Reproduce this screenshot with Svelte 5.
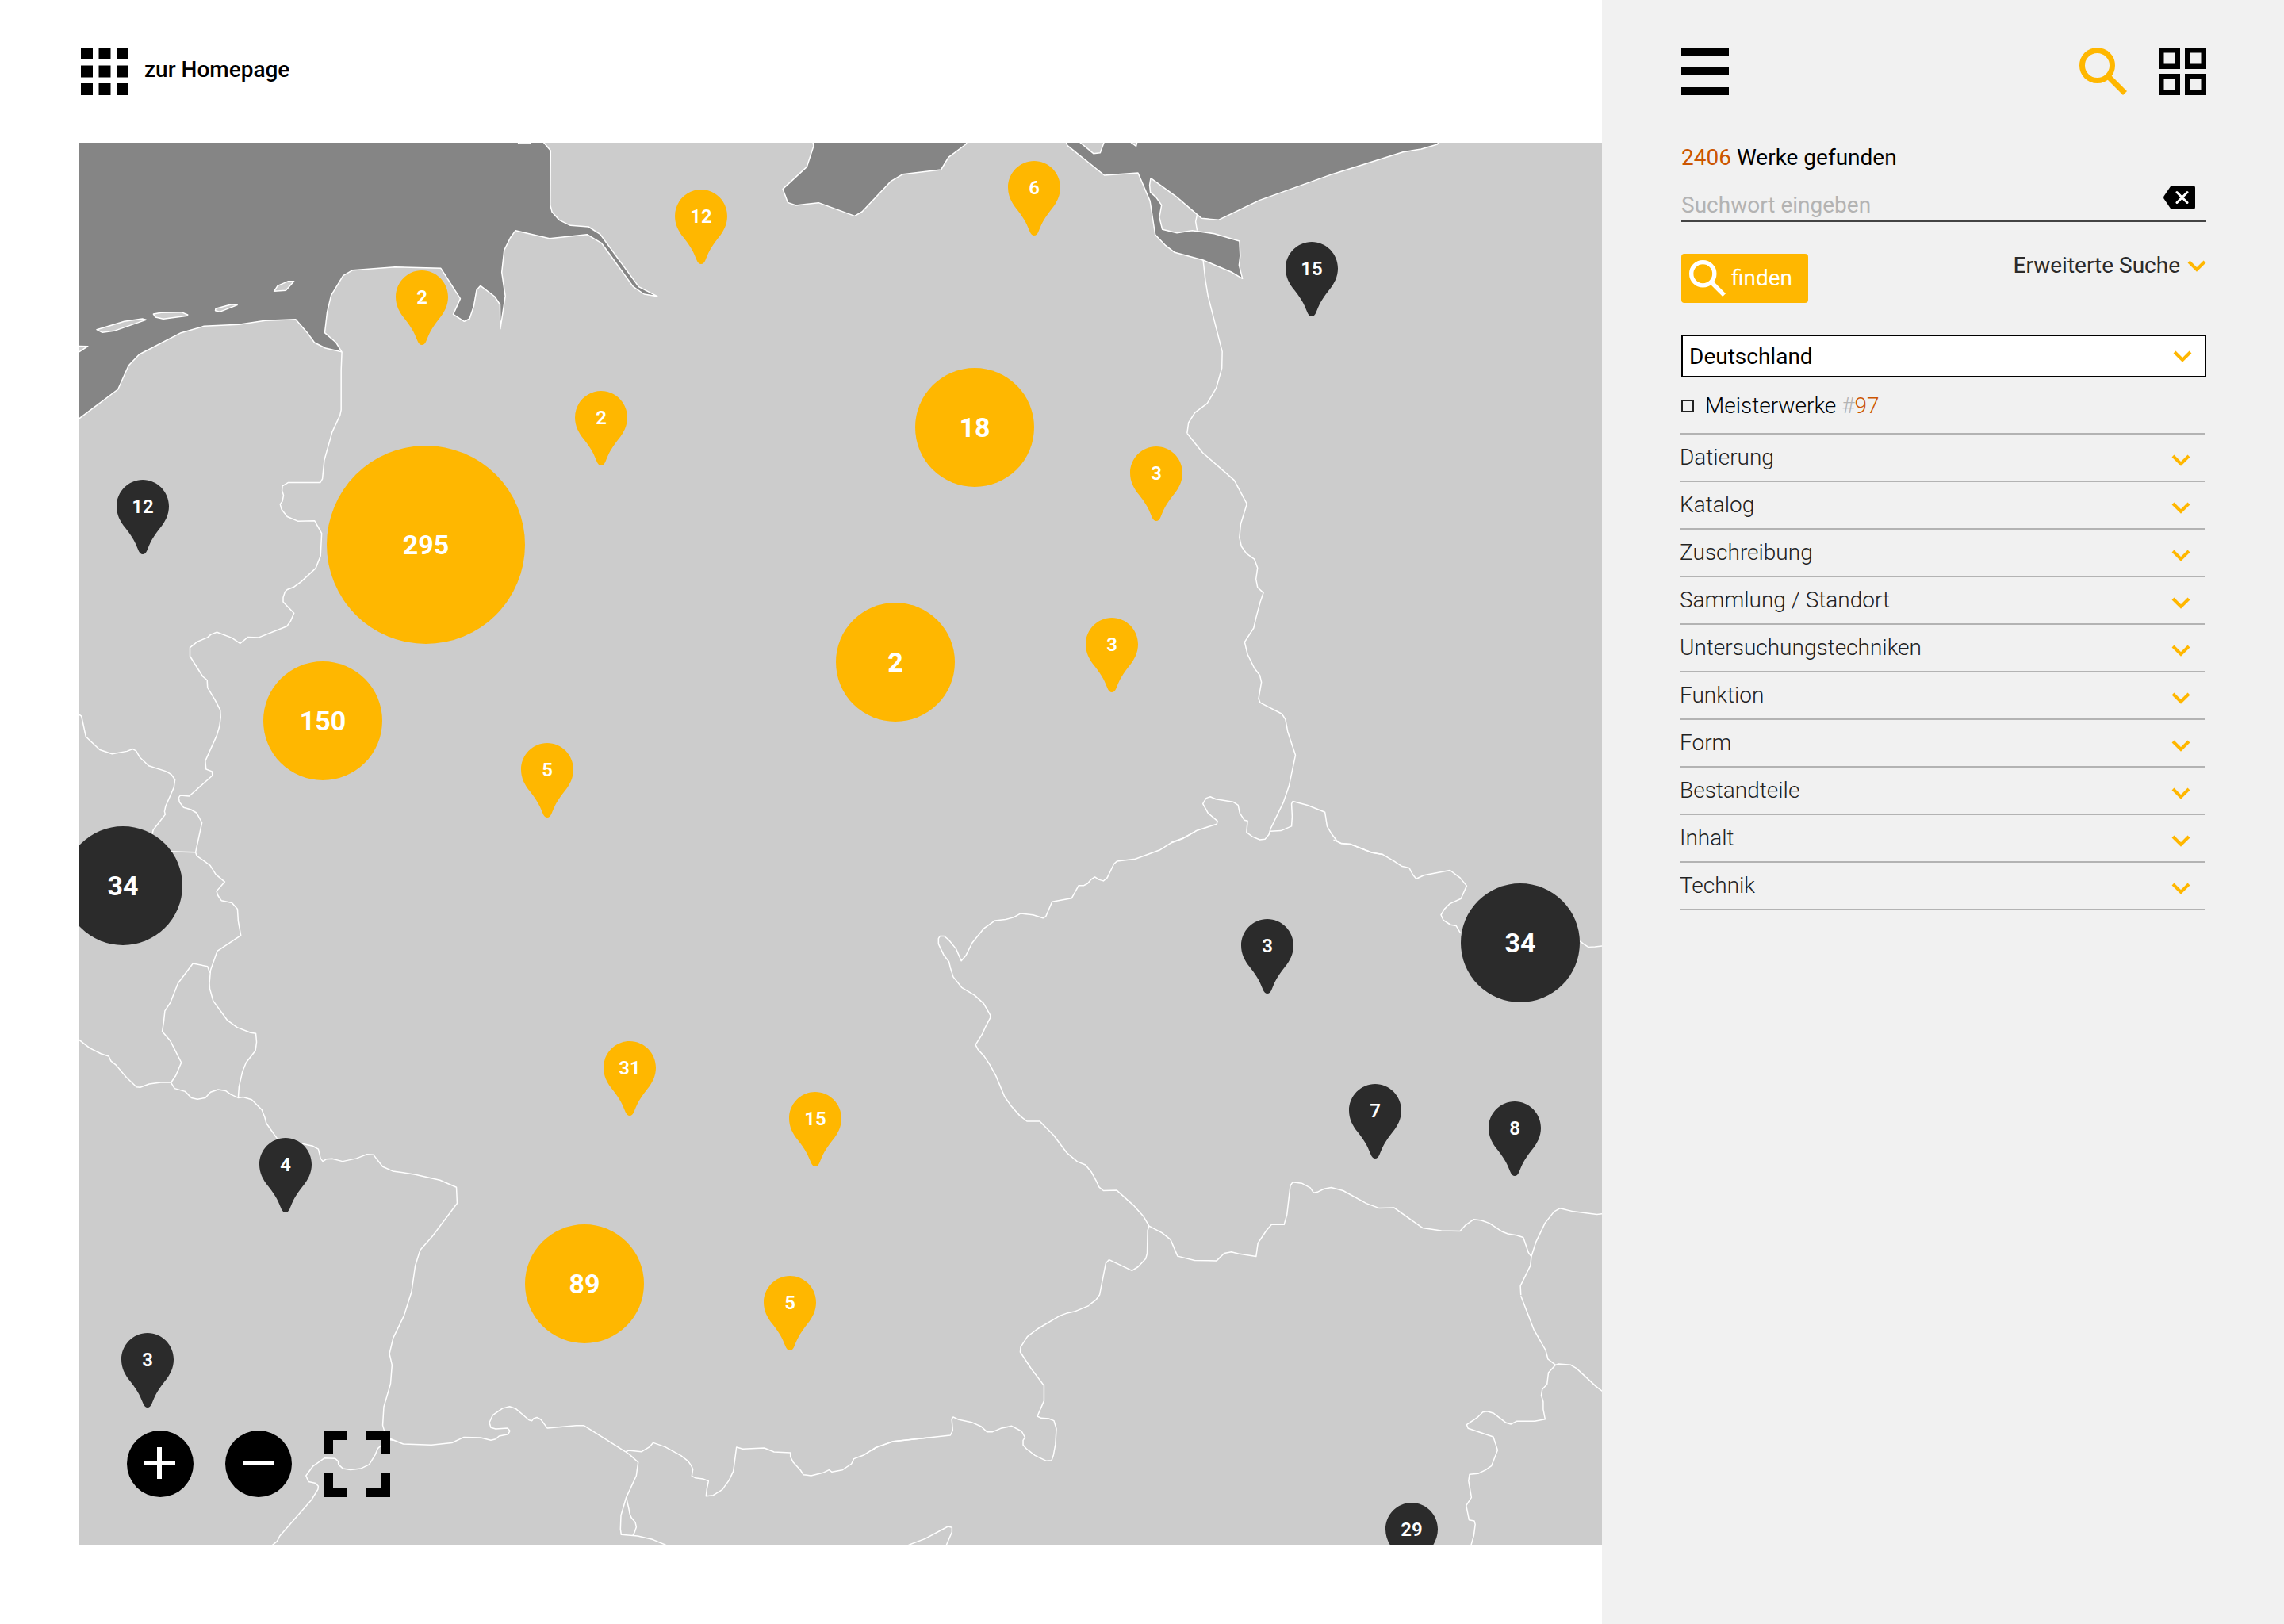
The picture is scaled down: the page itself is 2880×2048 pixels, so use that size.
<script lang="ts">
  const filters = [
    'Datierung', 'Katalog', 'Zuschreibung', 'Sammlung / Standort', 'Untersuchungstechniken',
    'Funktion', 'Form', 'Bestandteile', 'Inhalt', 'Technik',
  ];

  // Extent of the map drawing, in map units
  const W = 1920;
  const H = 1768;

  // Outlines are quantised per sector: each has an origin and a number of steps per map unit
  const sectors = [
    {
      x: -20, y: -140, kx: 2.24, ky: 3,
      sea: [
        'M20 380L1340 380L1357 420L1376 450L1375 656L1380 682L1400 712L1432 733L1483 738L1516 766L1625 965L1677 1001L1640 993L1609 964L1520 800L1479 767L1373 782L1277 752L1262 780L1245 826L1238 910L1248 1000L1234 1124L1233 1032L1218 1002L1178 961L1167 977L1159 1038L1147 1086L1132 1096L1101 1069L1121 1010L1066 895L936 890L817 902L790 923L756 998L745 1060L738 1139L770 1176L786 1211L740 1197L709 1176L689 1139L656 1088L570 1093L495 1108L397 1114L332 1139L214 1221L184 1263L154 1353L45 1463L20 1490Z',
      ],
      land: [
        'M94 1127L172 1096L223 1086L233 1090L143 1132L110 1138Z',
        'M254 1068L276 1063L333 1061L351 1071L350 1075L282 1087L260 1080Z',
        'M430 1048L475 1031L491 1034L441 1060L429 1055Z',
        'M605 961L635 944L651 944L628 979L595 982Z',
        'M20 1189L69 1190L45 1211L20 1230Z',
        'M1285 400L1285 423L1319 423L1319 400Z',
      ],
      lines: [],
    },
    {
      x: 600, y: -20, kx: 2.24, ky: 3,
      sea: [
        'M726 40L730 73L711 151L643 235L657 286L680 297L744 287L846 337L867 321L949 205L982 179L1090 162L1111 115L1160 66L1170 40Z',
      ],
      land: [], lines: [],
    },
    {
      x: 1200, y: -20, kx: 2.119, ky: 3,
      sea: [
        'M90 40L97 70L196 183L286 174L318 280L332 408L360 449L384 475L460 504L535 549L565 574L556 523L559 488L557 432L490 404L431 392L390 401L351 388L343 342L349 296L334 266L319 247L317 220L320 194L390 266L456 346L501 352L610 278L805 179L994 95L1043 84L1086 66L1095 40Z',
      ],
      land: ['M115 40L132 60L167 101L185 98L200 40Z', 'M262 40L268 60L281 73L286 40Z'],
      lines: [
        'M444 332L440 358L444 392',
        'M460 504L466 580L473 640L511 850L510 913L495 988L471 1046L438 1081L421 1119L417 1160',
      ],
    },
    {
      x: -20, y: 320, kx: 2.119, ky: 2.119,
      sea: [], land: [],
      lines: [
        'M744 -119L742 -70L742 36L739 50L718 95L697 170L692 220L686 230L600 230L585 239L584 251L588 264L585 280L579 288L583 302L598 321L626 333L671 332L690 366L687 426L674 459L635 495L616 509L598 516L592 522L587 537L587 549L616 579L607 600L597 614L522 644L493 643L472 660L450 645L410 630L394 636L385 644L358 655L338 671L338 694L372 748L384 758L385 778L404 809L419 838L420 857L417 881L410 905L379 974L381 996L397 1002L398 1013L336 1068L312 1066L308 1072L310 1084L321 1098L341 1104L356 1113L370 1139L353 1218L356 1227L392 1253L407 1277L431 1297L409 1322L413 1334L422 1347L450 1353L465 1370L467 1402L474 1440L411 1482L393 1533L390 1568L391 1583L400 1615L438 1667L464 1686L500 1700L514 1702L516 1725L513 1748L488 1780L478 1805L469 1845L467 1875',
        'M30 842L48 854L60 909L97 944L130 955L170 948L185 942L194 947L204 964L228 987L275 1002L288 1010L298 1024L295 1045L273 1095L270 1109L272 1117L240 1158L237 1170',
        'M280 1216L353 1218',
        'M391 1540L385 1523L346 1515L306 1568L286 1619L271 1642L268 1670L264 1697L285 1721L315 1780L300 1815L287 1834',
      ],
    },
    {
      x: -20, y: 1060, kx: 2.119, ky: 2.119,
      sea: [], land: [],
      lines: [
        'M30 142L70 173L100 188L121 195L127 208L140 218L168 251L195 277L205 278L229 269L260 265L287 265L297 281L325 289L342 306L358 310L379 306L393 291L413 284L433 287L447 297L467 306L480 304L503 311L530 338L538 358L542 374L571 415L600 425L640 429L666 435L681 443L687 468L693 476L702 470L718 469L746 476L783 468L811 457L828 458L853 490L880 502L940 511L1006 526L1050 545L1052 588L985 677L953 713L940 755L930 825L910 888L881 948L871 990L878 1020L874 1070L856 1132L853 1181L860 1205L875 1218L908 1231L983 1234L1038 1228L1070 1213L1115 1214L1142 1221L1155 1218L1164 1210L1188 1205L1193 1196L1187 1189L1155 1191L1142 1187L1138 1174L1147 1154L1173 1136L1192 1131L1209 1137L1244 1167L1252 1169L1256 1163L1265 1160L1276 1166L1293 1189L1370 1182L1391 1182L1502 1252',
        'M880 1221L867 1219L840 1243L833 1260L817 1286L794 1297L767 1300L747 1297L735 1286L734 1277L726 1270L697 1269L667 1290L648 1316L655 1332L674 1336L681 1344L680 1352L663 1380L578 1477L571 1491L550 1508',
      ],
    },
    {
      x: 670, y: 1600, kx: 3, ky: 3,
      sea: [], land: [],
      lines: [
        'M57 153L67 147L117 152L147 134L161 118L206 134L266 167L293 188L305 205L311 219L307 244L320 251L349 255L370 263L364 293L361 320L388 317L422 296L448 260L464 226L476 135L500 142L581 138L618 153L680 156L680 171L690 191L718 222L729 239L758 243L803 232L826 221L837 229L877 221L911 198L920 179L957 165L1003 136L1068 113L1203 99',
        'M57 153L72 163L104 192L97 243L59 325L39 393L37 445L40 466L102 471L158 484L204 503L230 515',
        'M59 325L69 369L72 387L79 403L93 419L97 437L90 458L84 469',
        'M1110 514L1132 503L1190 481L1276 435L1291 439L1291 456L1268 510',
      ],
    },
    {
      x: 1300, y: 320, kx: 2.45, ky: 2.6133,
      sea: [], land: [],
      lines: [
        'M238 122L285 185L383 276L422 354L403 420L399 465L405 494L421 518L445 536L455 565L450 602L455 629L473 647L463 678L450 730L443 763L415 809L424 850L445 895L462 919L467 942L458 996L463 1009L530 1046L541 1064L548 1104L572 1182L552 1284L535 1337L495 1425L490 1444L478 1459L462 1461L438 1450L421 1436L424 1399L414 1396L400 1373L395 1347L379 1336L326 1327L309 1319L296 1324L286 1342L302 1373L331 1399L329 1409L266 1431L228 1454L188 1470',
        'M495 1433L527 1431L560 1416L562 1385L560 1342L564 1334L610 1347L663 1370L670 1417L684 1442L699 1463L713 1473L741 1475L808 1503L842 1509',
      ],
    },
    {
      x: 1000, y: 780, kx: 1.668, ky: 2.24,
      sea: [], land: [],
      lines: [
        'M681 197L652 219L629 230L604 251L553 276L515 282L508 290L494 329L486 338L476 334L468 327L460 334L453 345L445 351L434 351L419 387L378 397L365 438L359 443L338 434L312 430L297 441L280 447L258 450L234 473L210 513L197 548L187 564L176 530L161 505L151 494L142 494L139 501L139 516L150 547L161 566L164 583L170 609L188 639L215 661L234 684L248 717L248 725L238 750L231 771L217 801L222 814L235 833L247 857L260 889L278 947L292 974L310 1001L325 1017L352 1017L381 1056L409 1106L431 1131L448 1140L460 1159L471 1186L477 1203L486 1213L514 1212L549 1254L571 1287L582 1313L609 1332L627 1351L642 1398L678 1410L724 1411L740 1390L755 1386L770 1391L807 1399L811 1361L829 1325L840 1308L866 1309L872 1280L879 1199L884 1189L903 1192L921 1205L928 1219L936 1217L950 1208L965 1204L990 1213L1039 1249L1065 1262L1097 1261L1157 1318L1197 1326L1236 1327L1248 1310L1265 1294L1281 1297L1298 1305L1325 1329L1337 1335L1355 1339L1369 1345L1380 1388L1386 1399L1384 1425L1363 1482L1364 1508',
        'M970 222L986 232L1005 234L1051 258L1073 263L1097 282L1114 297L1129 301L1137 321L1144 332L1160 322L1215 308L1236 329L1250 352L1238 388L1214 403L1203 418L1196 434L1201 449L1216 462L1228 465L1237 486',
        'M1488 508L1497 517L1506 525L1520 524L1550 520',
        'M1386 1399L1396 1357L1415 1304L1434 1272L1446 1263L1475 1272L1524 1280L1550 1276',
        'M582 1313L579 1325L578 1390L575 1405L559 1428L546 1439L498 1408L491 1418L478 1507L470 1522L456 1536',
      ],
    },
    {
      x: 1000, y: 1320, kx: 1.668, ky: 3,
      sea: [], land: [],
      lines: [
        'M456 439L427 461L411 467L394 478L347 528L326 557L312 596L311 615L333 675L361 742L361 800L347 858L355 865L371 867L382 875L387 905L385 965L381 1004L377 1025L366 1027L342 1006L324 981L317 967L317 949L321 938L314 915L293 895L270 904L253 917L241 917L229 897L209 881L182 871L170 861L167 868L169 912L164 930L45 953L7 977L-1 988',
        'M1364 403L1391 529L1416 608L1421 642L1437 664L1443 660L1469 664L1481 677L1522 745L1550 784',
        'M1437 664L1422 693L1419 737L1409 756L1407 779L1411 803L1411 832L1415 869L1393 877L1355 877L1343 888L1333 883L1307 847L1293 839L1284 842L1273 862L1250 890L1253 904L1306 936L1315 986L1302 1046L1290 1061L1274 1075L1256 1078L1254 1102L1260 1165L1249 1196L1255 1250L1266 1254L1268 1267L1265 1309L1257 1360',
      ],
    },
  ];

  const pins = [
    { n: 2, x: 432, y: 161 }, { n: 12, x: 784, y: 59 }, { n: 6, x: 1204, y: 23 },
    { n: 2, x: 658, y: 313 }, { n: 3, x: 1358, y: 383 }, { n: 3, x: 1302, y: 599 },
    { n: 5, x: 590, y: 757 }, { n: 31, x: 694, y: 1133 }, { n: 15, x: 928, y: 1197 },
    { n: 5, x: 896, y: 1429 },
    { n: 15, x: 1554, y: 125, dark: true }, { n: 12, x: 80, y: 425, dark: true },
    { n: 3, x: 1498, y: 979, dark: true }, { n: 7, x: 1634, y: 1187, dark: true },
    { n: 8, x: 1810, y: 1209, dark: true }, { n: 4, x: 260, y: 1255, dark: true },
    { n: 3, x: 86, y: 1501, dark: true }, { n: 29, x: 1680, y: 1715, dark: true },
  ];

  const clusters = [
    { n: 295, x: 437, y: 507, big: true }, { n: 150, x: 307, y: 729 }, { n: 18, x: 1129, y: 359 },
    { n: 2, x: 1029, y: 655 }, { n: 89, x: 637, y: 1439 },
    { n: 34, x: 55, y: 937, dark: true }, { n: 34, x: 1817, y: 1009, dark: true },
  ];

  const place = (x: number, y: number) => `left:${(x / W) * 100}%;top:${(y / H) * 100}%`;
</script>

{#snippet chevron()}
  <svg class="chevron" viewBox="0 0 24 15" aria-hidden="true"><path d="M2 2L12 12L22 2" /></svg>
{/snippet}

{#snippet lens()}
  <svg class="lens" viewBox="0 0 60 60" aria-hidden="true">
    <circle cx="22.500" cy="22.500" r="19" />
    <path d="M37.500 37.500L57.500 57.500" />
  </svg>
{/snippet}

<div class="app">
  <main>
    <header class="top">
      <a class="home" href="#home">
        <svg viewBox="0 0 60 60" aria-hidden="true">
          {#each [0, 22.5, 45] as y}
            {#each [0, 22.5, 45] as x}
              <rect {x} {y} width="15" height="15" />
            {/each}
          {/each}
        </svg>
        <span>zur Homepage</span>
      </a>
    </header>

    <section class="map" aria-label="Karte">
      <svg class="base" viewBox="0 0 {W} {H}" preserveAspectRatio="none" aria-hidden="true">
        {#each sectors as s}
          <g transform="translate({s.x} {s.y}) scale({1 / s.kx} {1 / s.ky})">
            {#each s.sea as d}<path class="sea" {d} />{/each}
            {#each s.land as d}<path class="land" {d} />{/each}
            {#each s.lines as d}<path class="line" {d} />{/each}
          </g>
        {/each}
      </svg>

      {#each clusters as c}
        <button class="cluster" class:big={c.big} class:dark={c.dark} style={place(c.x, c.y)}>{c.n}</button>
      {/each}
      {#each pins as p}
        <button class="pin" class:dark={p.dark} style={place(p.x, p.y)}>
          <svg viewBox="0 0 66 94" aria-hidden="true">
            <path d="M33 0C51.200 0 66 15 66 33.500C66 44 61.500 52.500 55.500 60C48 69.500 43.500 76 38.500 89Q36.500 94 33 94Q29.500 94 27.500 89C22.500 76 18 69.500 10.500 60C4.500 52.500 0 44 0 33.500C0 15 14.800 0 33 0Z" />
          </svg>
          <span>{p.n}</span>
        </button>
      {/each}

      <div class="controls">
        <button aria-label="Vergrößern">
          <svg viewBox="0 0 84 84"><circle cx="42" cy="42" r="42" /><path class="sign" d="M21 41H61M41 21V61" /></svg>
        </button>
        <button aria-label="Verkleinern">
          <svg viewBox="0 0 84 84"><circle cx="42" cy="42" r="42" /><path class="sign" d="M22 41H62" /></svg>
        </button>
        <button aria-label="Vollbild">
          <svg viewBox="0 0 84 84"><path class="corners" d="M30 6H6V30M54 6H78V30M78 54V78H54M30 78H6V54" /></svg>
        </button>
      </div>
    </section>
  </main>

  <aside>
    <nav>
      <button aria-label="Menü">
        <svg viewBox="0 0 60 60"><path d="M0 0H60V10H0ZM0 25H60V35H0ZM0 50H60V60H0Z" /></svg>
      </button>
      <button class="search" aria-label="Suche">{@render lens()}</button>
      <button aria-label="Kachelansicht">
        <svg viewBox="0 0 60 60">
          <path fill-rule="evenodd" d="M0 0H27V27H0ZM6.500 6.500V20.500H20.500V6.500ZM33 0H60V27H33ZM39.500 6.500V20.500H53.500V6.500ZM0 33H27V60H0ZM6.500 39.500V53.500H20.500V39.500ZM33 33H60V60H33ZM39.500 39.500V53.500H53.500V39.500Z" />
        </svg>
      </button>
    </nav>

    <p class="count"><b>2406</b> Werke gefunden</p>

    <form onsubmit={(e) => e.preventDefault()}>
      <div class="field">
        <input type="text" placeholder="Suchwort eingeben" aria-label="Suchwort" />
        <button type="button" aria-label="Eingabe löschen">
          <svg viewBox="0 0 40 30">
            <path d="M9 1Q9.800 0 11 0H37Q40 0 40 3V27Q40 30 37 30H11Q9.800 30 9 29L0.500 16.500Q-0.200 15 0.500 13.500Z" />
            <path class="cross" d="M17 8.500L30 21.500M30 8.500L17 21.500" />
          </svg>
        </button>
      </div>

      <div class="actions">
        <button class="find">{@render lens()}<span>finden</span></button>
        <a class="advanced" href="#erweitert">Erweiterte Suche {@render chevron()}</a>
      </div>

      <div class="country">
        <select aria-label="Land"><option>Deutschland</option></select>
        {@render chevron()}
      </div>

      <label class="check"><input type="checkbox" /><span>Meisterwerke <i>#</i><b>97</b></span></label>
    </form>

    <ul>
      {#each filters as f}
        <li><button><span>{f}</span>{@render chevron()}</button></li>
      {/each}
    </ul>
  </aside>
</div>

<style>
  :global(body) { margin: 0; background: #fff; }
  * { box-sizing: border-box; }
  .app {
    display: grid;
    grid-template-columns: 101fr 43fr;
    min-height: 100vh;
    font: 400 28px/40px Roboto, 'Liberation Sans', sans-serif;
    color: #000;
  }
  button {
    border: 0;
    padding: 0;
    background: none;
    font: inherit;
    color: inherit;
    cursor: pointer;
  }
  svg { display: block; }
  a { color: inherit; text-decoration: none; }

  main { display: flex; flex-direction: column; padding: 0 0 100px 100px; min-width: 0; }
  .top { display: flex; padding: 60px 2px; }
  .home { display: flex; align-items: center; gap: 20px; font-weight: 500; }
  .home svg { width: 60px; height: 60px; }
  .home span { padding-bottom: 4px; }

  .map { position: relative; flex: 1; min-height: 600px; overflow: hidden; background: #ccc; }
  .base { position: absolute; inset: 0; width: 100%; height: 100%; }
  .base path { stroke: #fff; stroke-width: 1.5px; vector-effect: non-scaling-stroke; stroke-linejoin: round; }
  .sea { fill: #858585; }
  .land { fill: #ccc; }
  .line { fill: none; }

  .cluster {
    position: absolute;
    display: grid;
    place-items: center;
    width: 150px;
    height: 150px;
    border-radius: 50%;
    background: #ffb700;
    color: #fff;
    font-size: 34px;
    font-weight: 700;
    transform: translate(-50%, -50%);
  }
  .big { width: 250px; height: 250px; }
  .cluster.dark { background: #2b2b2b; }
  .pin {
    position: absolute;
    width: 66px;
    height: 94px;
    transform: translateX(-50%);
    color: #fff;
    fill: #ffb700;
    font-size: 24px;
    font-weight: 600;
  }
  .pin.dark { fill: #2b2b2b; }
  .pin svg { width: 66px; height: 94px; }
  .pin span { position: absolute; inset: 0 0 auto; line-height: 68px; }

  .controls { position: absolute; left: 60px; bottom: 60px; display: flex; gap: 40px; }
  .controls svg { width: 84px; height: 84px; }
  .sign { stroke: #fff; stroke-width: 6; }
  .corners { fill: none; stroke: #000; stroke-width: 12; }

  aside { background: #f1f1f1; padding: 60px 98px 60px 100px; min-width: 0; }
  nav { display: flex; gap: 40px; }
  nav svg { width: 60px; height: 60px; }
  .search { margin-left: auto; color: #ffb700; }
  .lens { fill: none; stroke: currentColor; stroke-width: 7; }
  .chevron { flex: none; width: 24px; height: 15px; fill: none; stroke: #ffb700; stroke-width: 4; }

  .count { margin: 59px 0 0; }
  b { font-weight: 400; color: #cc5600; }
  i { font-style: normal; color: #b3b3b3; }

  .field { display: flex; align-items: center; border-bottom: 2px solid #444; height: 61px; padding-right: 14px; }
  .field input {
    flex: 1;
    min-width: 0;
    height: 40px;
    margin-top: 20px;
    border: 0;
    padding: 0;
    outline: 0;
    background: none;
    font: inherit;
  }
  .field input::placeholder { color: #b3b3b3; opacity: 1; }
  .field svg { width: 40px; height: 30px; }
  .cross { fill: none; stroke: #fff; stroke-width: 3; stroke-linecap: round; }

  .actions { display: flex; justify-content: space-between; align-items: flex-start; margin-top: 40px; }
  .find {
    display: flex;
    align-items: center;
    gap: 7px;
    width: 160px;
    height: 62px;
    padding: 0 10px;
    border-radius: 4px;
    background: #ffb700;
    color: #fff;
  }
  .find .lens { width: 46px; height: 46px; }
  .advanced { display: flex; align-items: center; gap: 9px; line-height: 30px; color: #2b2b2b; }

  .country { display: flex; align-items: center; margin-top: 40px; border: 2px solid #000; background: #fff; height: 54px; padding-right: 16px; }
  select { flex: 1; appearance: none; border: 0; padding: 2px 0 0 8px; outline: 0; background: none; font: inherit; color: #000; }

  .check { display: flex; align-items: center; gap: 14px; margin-top: 16px; }
  .check input { appearance: none; width: 16px; height: 16px; margin: 0; border: 2px solid #222; }
  .check span, .check b { font-weight: 300; }

  ul { list-style: none; margin: 14px 2px 0 -2px; padding: 0; border-top: 2px solid #b3b3b3; }
  li { border-bottom: 2px solid #b3b3b3; }
  li button {
    display: flex;
    align-items: center;
    justify-content: space-between;
    width: 100%;
    height: 58px;
    padding-right: 18px;
    font-weight: 300;
    color: #222;
  }
  li .chevron { margin-top: 6px; }
</style>
